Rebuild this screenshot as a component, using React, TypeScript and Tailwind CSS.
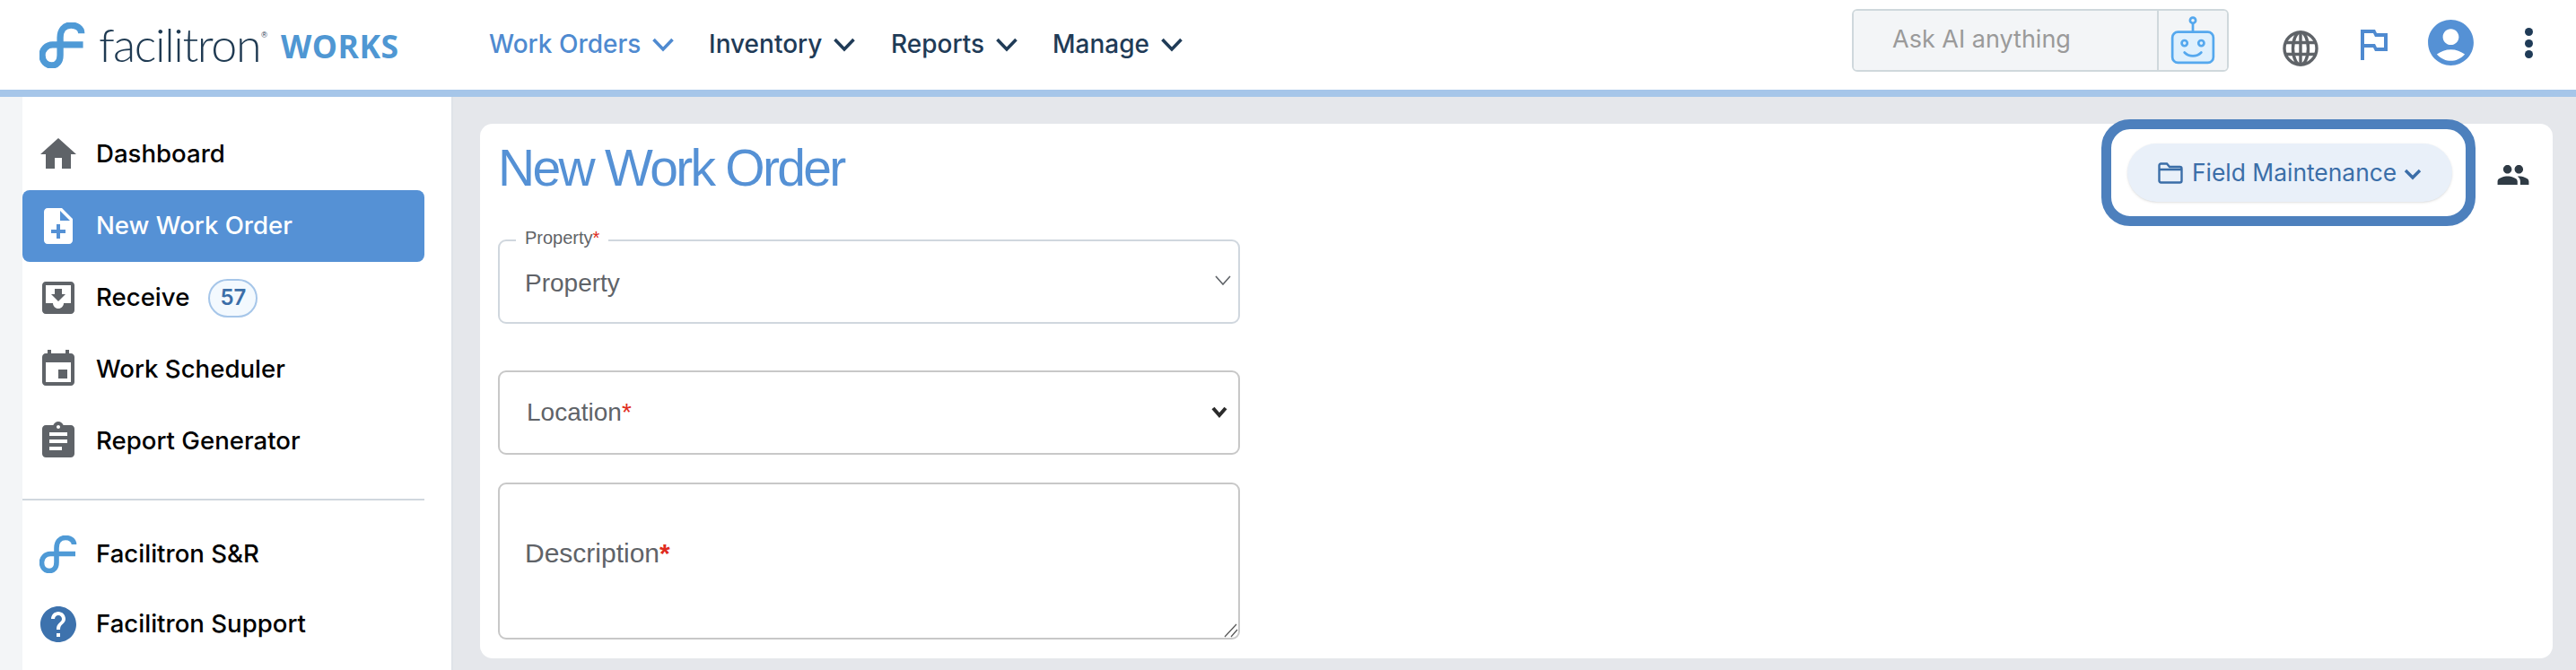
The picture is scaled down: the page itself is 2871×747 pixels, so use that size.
import React from "react";

const P = {
  home: "M10 20v-6h4v6h5v-8h3L12 3 2 12h3v8z",
  note: "M14 2H6c-1.1 0-1.99.9-1.99 2L4 20c0 1.1.89 2 1.99 2H18c1.1 0 2-.9 2-2V8l-6-6zm2 14h-3v3h-2v-3H8v-2h3v-3h2v3h3v2zm-3-7V3.5L18.5 9H13z",
  inbox: "M19 3H4.99c-1.11 0-1.98.9-1.98 2L3 19c0 1.1.88 2 1.99 2H19c1.1 0 2-.9 2-2V5c0-1.1-.9-2-2-2zm0 12h-4c0 1.66-1.35 3-3 3s-3-1.34-3-3H4.99V5H19v10zm-3-5h-2V7h-4v3H8l4 4 4-4z",
  event: "M17 12h-5v5h5v-5zM16 1v2H8V1H6v2H5c-1.11 0-1.99.9-1.99 2L3 19c0 1.1.89 2 2 2h14c1.1 0 2-.9 2-2V5c0-1.1-.9-2-2-2h-1V1h-2zm3 18H5V8h14v11z",
  assign: "M19 3h-4.18C14.4 1.84 13.3 1 12 1c-1.3 0-2.4.84-2.82 2H5c-1.1 0-2 .9-2 2v14c0 1.1.9 2 2 2h14c1.1 0 2-.9 2-2V5c0-1.1-.9-2-2-2zm-7 0c.55 0 1 .45 1 1s-.45 1-1 1-1-.45-1-1 .45-1 1-1zm2 14H7v-2h7v2zm3-4H7v-2h10v2zm0-4H7V7h10v2z",
  help: "M12 2C6.48 2 2 6.48 2 12s4.48 10 10 10 10-4.48 10-10S17.52 2 12 2zm1 17h-2v-2h2v2zm2.07-7.75l-.9.92C13.45 12.9 13 13.5 13 15h-2v-.5c0-1.1.45-2.1 1.17-2.83l1.24-1.26c.37-.36.59-.86.59-1.41 0-1.1-.9-2-2-2s-2 .9-2 2H8c0-2.21 1.79-4 4-4s4 1.79 4 4c0 .88-.36 1.68-.93 2.25z",
  flag: "M14 6l-1-2H5v17h2v-7h5l1 2h7V6h-6zm4 8h-4l-1-2H7V6h5l1 2h5v6z",
  account: "M12 2C6.48 2 2 6.48 2 12s4.48 10 10 10 10-4.48 10-10S17.52 2 12 2zm0 4c1.93 0 3.5 1.57 3.5 3.5S13.93 13 12 13s-3.5-1.57-3.5-3.5S10.07 6 12 6zm0 14c-2.03 0-4.43-.82-6.14-2.88C7.55 15.8 9.68 15 12 15s4.45.8 6.14 2.12C16.43 19.18 14.03 20 12 20z",
  people: "M16 11c1.66 0 2.99-1.34 2.99-3S17.66 5 16 5c-1.66 0-3 1.34-3 3s1.34 3 3 3zm-8 0c1.66 0 2.99-1.34 2.99-3S9.66 5 8 5C6.34 5 5 6.34 5 8s1.34 3 3 3zm0 2c-2.33 0-7 1.17-7 3.5V19h14v-2.5c0-2.33-4.67-3.5-7-3.5zm8 0c-.29 0-.62.02-.97.05 1.16.84 1.97 1.97 1.97 3.45V19h6v-2.5c0-2.33-4.67-3.5-7-3.5z",
};

function Mi({ d, size = 48, className = "" }: { d: string; size?: number; className?: string }) {
  return (
    <svg width={size} height={size} viewBox="0 0 24 24" className={className} fill="currentColor">
      <path d={d} />
    </svg>
  );
}

function Logo({ size, stroke }: { size: number; stroke: number }) {
  return (
    <svg width={size} height={size} viewBox="0 0 42 42" fill="none" stroke="#4f9ad6" strokeWidth={stroke} className="shrink-0">
      <path d="M38.5 10 C38.5 5 33.5 2.5 29 2.5 C22.5 2.5 19 7.5 19 14 L19 30 C19 36 16 39.5 11 39.5 C6 39.5 2.5 35.5 2.5 30 C2.5 25 6.5 20.5 12 20.5 L40 20.5" />
    </svg>
  );
}

function Chevron({ className = "" }: { className?: string }) {
  return (
    <svg width="24" height="16" viewBox="0 0 24 16" fill="none" stroke="currentColor" strokeWidth="3.6" className={className}>
      <path d="M1.5 2 L12 13 L22.5 2" />
    </svg>
  );
}

function NavItem({ label, active, w }: { label: string; active?: boolean; w: string }) {
  return (
    <div className={`flex items-center gap-[13px] ${w} ${active ? "text-[#4f8ad0]" : "text-[#1f3b57]"}`}>
      <span className="text-[28px] font-medium leading-none whitespace-nowrap">{label}</span>
      <Chevron className="mt-[2px] shrink-0" />
    </div>
  );
}

function Robot() {
  return (
    <svg width="50" height="54" viewBox="0 0 48 52" fill="none" stroke="#55a8ee" strokeWidth="2.6">
      <circle cx="24" cy="4.5" r="3" />
      <path d="M24 8 V17" />
      <rect x="2" y="17" width="44" height="33" rx="6" fill="#dff0fd" />
      <circle cx="15" cy="29" r="3" />
      <circle cx="33" cy="29" r="3" />
      <path d="M15 39 C20 44 28 44 33 39" strokeLinecap="round" />
    </svg>
  );
}

function Globe() {
  return (
    <svg width="40" height="40" viewBox="0 0 40 40" fill="none" stroke="#5f6368" strokeWidth="3.4">
      <circle cx="20" cy="20" r="18" />
      <ellipse cx="20" cy="20" rx="8.5" ry="18" />
      <path d="M20 2 V38 M3 13.5 H37 M3 26.5 H37" />
    </svg>
  );
}

function SideItem({ icon, label, active, badge, h = "h-[80px]" }: { icon: React.ReactNode; label: string; active?: boolean; badge?: string; h?: string }) {
  return (
    <div className={`${h} w-[448px] flex items-center rounded-[8px] ${active ? "bg-[#5591d5] text-white" : "text-black"}`}>
      <div className="w-[82px] flex justify-center shrink-0 pr-[2px]">{icon}</div>
      <span className="text-[27.6px] font-medium leading-none whitespace-nowrap">{label}</span>
      {badge && (
        <span className="ml-[21px] w-[55px] h-[43px] rounded-full border-2 border-[#a6c6e9] bg-[#f3f9fe] text-[#3b6ea8] text-[24px] font-semibold flex items-center justify-center">
          {badge}
        </span>
      )}
    </div>
  );
}

const gray = "text-[#5f6368]";

export default function App() {
  return (
    <div className="w-[2871px] h-[747px] overflow-hidden flex flex-col bg-[#e5e7eb] font-['Inter',sans-serif]">
      <header className="h-[108px] shrink-0 bg-white border-b-[8px] border-[#a6c6e9] flex items-center">
        <div className="ml-[44px] w-[51px]">
          <Logo size={51} stroke={6} />
        </div>
        <div className="ml-[15px] flex items-start w-[178px] -mt-[3px]">
          <span className="font-['Lato',sans-serif] font-light text-[#1f3a52] text-[52px] leading-none tracking-[-1.4px]">facilitron</span>
          <span className="font-['Liberation_Sans',sans-serif] text-[9px] text-[#1f3a52] mt-[10px] ml-px">®</span>
        </div>
        <span className="ml-[25px] w-[232px] font-['Open_Sans',sans-serif] font-bold text-[#4f97d3] text-[35.5px] leading-none tracking-[0.5px] mt-[3px]">WORKS</span>
        <nav className="flex items-center -mt-[3px]">
          <NavItem label="Work Orders" active w="w-[245px]" />
          <NavItem label="Inventory" w="w-[203px]" />
          <NavItem label="Reports" w="w-[180px]" />
          <NavItem label="Manage" w="w-[160px]" />
        </nav>
        <div className="ml-[731px] -mt-[11px] w-[420px] h-[70px] flex border-2 border-[#cfd8dc] rounded-[6px] overflow-hidden">
          <div className="w-[340px] bg-[#f3f5f7] border-r-2 border-[#cfd8dc] pl-[43px] flex items-center text-[#9a9a9a] text-[27px] whitespace-nowrap">Ask AI anything</div>
          <div className="flex-1 bg-[#f3f5f7] flex items-center justify-center">
            <Robot />
          </div>
        </div>
        <div className="ml-[60px] mt-[8px] shrink-0">
          <Globe />
        </div>
        <Mi d={P.flag} size={48} className="ml-[37px] -mt-[2px] text-[#4f8ad0] shrink-0" />
        <Mi d={P.account} size={61} className="ml-[32px] -mt-[6px] text-[#5591d5] shrink-0" />
        <div className="ml-[52px] -mt-[4px] flex flex-col gap-[3.5px]">
          <span className="w-[9px] h-[9px] rounded-full bg-[#1f3b57]" />
          <span className="w-[9px] h-[9px] rounded-full bg-[#1f3b57]" />
          <span className="w-[9px] h-[9px] rounded-full bg-[#1f3b57]" />
        </div>
      </header>

      <div className="flex flex-1 min-h-0">
        <aside className="w-[505px] shrink-0 bg-[#f3f5f7] pl-[25px]">
          <div className="h-full bg-white border-r-2 border-[#dfe3e8] pt-[24px]">
            <SideItem icon={<Mi d={P.home} className={gray} />} label="Dashboard" />
            <SideItem icon={<Mi d={P.note} className="text-white" />} label="New Work Order" active />
            <SideItem icon={<Mi d={P.inbox} className={gray} />} label="Receive" badge="57" />
            <SideItem icon={<Mi d={P.event} className={gray} />} label="Work Scheduler" />
            <SideItem icon={<Mi d={P.assign} className={gray} />} label="Report Generator" />
            <div className="w-[448px] h-[2px] bg-[#d0d7de] mt-[24px] mb-[21px]" />
            <SideItem h="h-[78px]" icon={<Logo size={42} stroke={5.6} />} label="Facilitron S&R" />
            <SideItem h="h-[78px]" icon={<Mi d={P.help} className="text-[#3d72ad]" />} label="Facilitron Support" />
          </div>
        </aside>

        <main className="flex-1 min-w-0 pl-[30px] pr-[26px] pt-[30px] pb-[13px] font-['Liberation_Sans',sans-serif]">
          <div className="h-full bg-white rounded-[14px] pl-[20px] pr-[25px]">
            <div className="h-[129px] flex justify-between items-start">
              <h1 className="mt-[16px] text-[#5591d5] text-[57px] leading-[66px] tracking-[-2.7px]">New Work Order</h1>
              <div className="flex items-start -mt-[5px]">
                <div className="w-[417px] h-[119px] border-[11px] border-[#4d80bd] rounded-[32px] pl-[18px] pt-[16px]">
                  <div className="w-[362px] h-[65px] rounded-full bg-[#e9f0f9] shadow-sm flex items-center pl-[34px] text-[#3b6ea8] font-['Inter',sans-serif]">
                    <svg width="28" height="24" viewBox="0 0 28 24" fill="none" stroke="currentColor" strokeWidth="2.4">
                      <path d="M1.5 21 V3.5 Q1.5 1.5 3.5 1.5 H10 L13 5 H24.5 Q26.5 5 26.5 7 V20.5 Q26.5 22.5 24.5 22.5 H3.5 Q1.5 22.5 1.5 20.5 Z M1.5 8 H26.5" />
                    </svg>
                    <span className="ml-[10px] text-[26.4px] leading-none whitespace-nowrap">Field Maintenance</span>
                    <svg width="20" height="13" viewBox="0 0 20 13" fill="none" stroke="currentColor" strokeWidth="3.4" className="ml-[8px] mt-[3px]">
                      <path d="M2 2 L10 10 L18 2" />
                    </svg>
                  </div>
                </div>
                <Mi d={P.people} size={38} className="ml-[23px] mt-[43px] text-[#2f3b45]" />
              </div>
            </div>

            <div className="relative w-[827px] h-[94px] border-2 border-[#d0d7de] rounded-[9px] flex items-center pl-[28px] pr-[8px] justify-between">
              <span className="absolute -top-[16px] left-[18px] bg-white px-[10px] text-[20px] leading-[24px] text-[#5f6368]">
                Property<span className="text-[#e02b20]">*</span>
              </span>
              <span className="text-[28px] text-[#5f6368] leading-none mt-[3px]">Property</span>
              <svg width="18" height="11" viewBox="0 0 18 11" fill="none" stroke="#5f6368" strokeWidth="1.6" className="-mt-[3px]">
                <path d="M1 1 L9 10 L17 1" />
              </svg>
            </div>

            <div className="mt-[52px] w-[827px] h-[94px] border-2 border-[#c8c8c8] rounded-[9px] flex items-center pl-[30px] pr-[12px] justify-between">
              <span className="text-[28px] text-[#5f6368] leading-none">
                Location<span className="text-[#e02b20]">*</span>
              </span>
              <svg width="18" height="14" viewBox="0 0 18 14" fill="none" stroke="#2b2b2b" strokeWidth="4">
                <path d="M2 2 L9 10 L16 2" />
              </svg>
            </div>

            <div className="relative mt-[31px] w-[827px] h-[175px]">
              <textarea className="block w-[827px] h-[175px] border-2 border-[#c8c8c8] rounded-[9px] bg-white outline-none resize-none" aria-label="Description" />
              <span className="absolute left-[30px] top-[62px] text-[30px] leading-[34px] text-[#5f6368]">
                Description<span className="text-[#e02b20] font-bold">*</span>
              </span>
              <svg width="16" height="16" viewBox="0 0 16 16" fill="none" stroke="#555555" strokeWidth="1.2" className="absolute right-[2px] bottom-[2px]">
                <path d="M1 15 L14 1 M8 15 L15 7" />
              </svg>
            </div>
          </div>
        </main>
      </div>
    </div>
  );
}
